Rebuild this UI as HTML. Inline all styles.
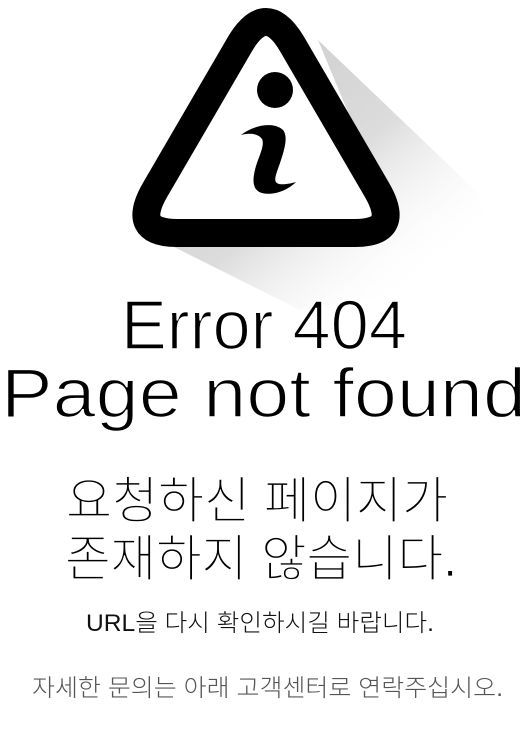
<!DOCTYPE html>
<html><head><meta charset="utf-8"><style>
html,body{margin:0;padding:0;background:#fff;width:530px;height:736px;overflow:hidden}
svg{display:block}
.k{font-family:"Liberation Sans","Noto Sans CJK KR","NanumGothic",sans-serif;font-weight:300}
.e{font-family:"Liberation Sans",sans-serif;font-weight:normal}
</style></head><body>
<svg width="530" height="736" viewBox="0 0 530 736" xmlns="http://www.w3.org/2000/svg">
<defs>
<linearGradient id="sh" x1="0" y1="0" x2="1" y2="1">
<stop offset="0" stop-color="#c8c8c8"/>
<stop offset="0.5" stop-color="#dcdcdc"/>
<stop offset="0.85" stop-color="#fff" stop-opacity="0"/>
</linearGradient>
</defs>
<polygon points="318,40 480,195 490,280 300,310 160,240 395,225" fill="url(#sh)"/>
<path d="M240,44 Q266,0 292,44 L377,190 Q402,233 355,233 L177,233 Q130,233 155,190 Z" fill="#fff" stroke="#000" stroke-width="28" stroke-linejoin="round"/>
<circle cx="275" cy="90" r="18" fill="#000"/>
<path d="M241,135 C255,124 275,122 283,130 C288,136 285,148 281,160 C276,175 272,182 279,184 C285,185 292,183 296,182 C288,190 274,196 262,193 C252,190 252,180 256,166 C259,156 265,145 262,139 C258,133 248,133 241,135 Z" fill="#000"/>
<g stroke="#fff" stroke-width="1.6">
<text class="e" x="264" y="349" font-size="70" text-anchor="middle" textLength="286" lengthAdjust="spacingAndGlyphs">Error 404</text>
<text class="e" x="1" y="417" font-size="70" textLength="525" lengthAdjust="spacingAndGlyphs">Page not found</text>
</g>
<g stroke="#fff" stroke-width="0.8">
<text class="k" x="66" y="518" font-size="50" textLength="382" lengthAdjust="spacingAndGlyphs" fill="#000">요청하신 페이지가</text>
<text class="k" x="65" y="576" font-size="50" textLength="392" lengthAdjust="spacingAndGlyphs" fill="#000">존재하지 않습니다.</text>
</g>
<text class="k" x="86" y="631" font-size="24" textLength="348" lengthAdjust="spacingAndGlyphs" fill="#111">URL을 다시 확인하시길 바랍니다.</text>
<text class="k" x="32" y="696" font-size="24" textLength="471" lengthAdjust="spacingAndGlyphs" fill="#555">자세한 문의는 아래 고객센터로 연락주십시오.</text>
</svg>
</body></html>
